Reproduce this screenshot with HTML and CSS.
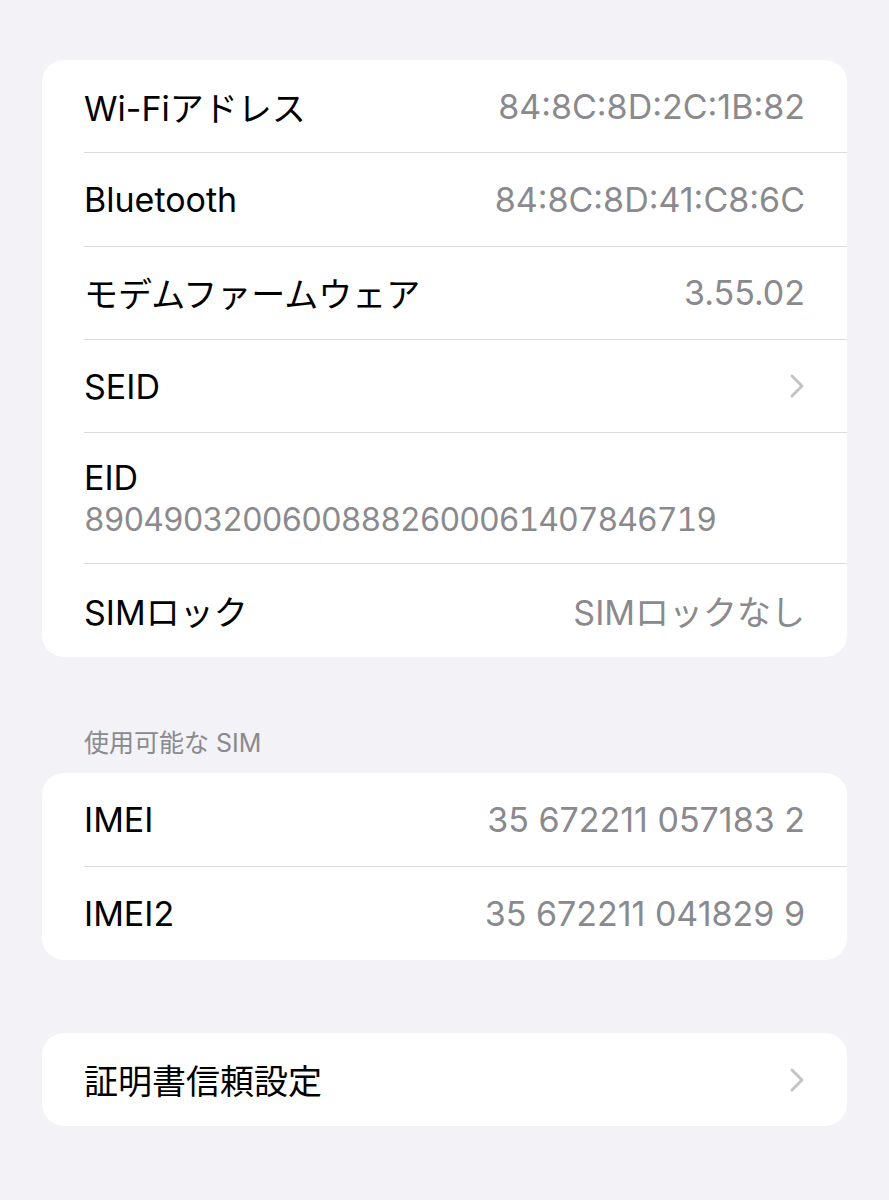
FILE: index.html
```html
<!DOCTYPE html>
<html lang="ja">
<head>
    <meta charset="UTF-8">
    <meta name="viewport" content="width=device-width, initial-scale=1.0">
    <title>情報</title>
    <link rel="stylesheet" href="styles.css">
</head>
<body>
    <div class="page">
        <div class="group">
            <div class="row">
                <span class="label">Wi-Fiアドレス</span>
                <span class="value">84:8C:8D:2C:1B:82</span>
            </div>
            <div class="row">
                <span class="label">Bluetooth</span>
                <span class="value">84:8C:8D:41:C8:6C</span>
            </div>
            <div class="row">
                <span class="label">モデムファームウェア</span>
                <span class="value">3.55.02</span>
            </div>
            <div class="row">
                <span class="label">SEID</span>
                <svg class="chevron" viewBox="0 0 16 26" width="16" height="26">
                    <path d="M3 3 L13 13 L3 23" fill="none" stroke="#c4c4c7" stroke-width="3" stroke-linecap="round" stroke-linejoin="round"/>
                </svg>
            </div>
            <div class="row row-tall">
                <span class="label">EID</span>
                <span class="eid">89049032006008882600061407846719</span>
            </div>
            <div class="row">
                <span class="label">SIMロック</span>
                <span class="value">SIMロックなし</span>
            </div>
        </div>

        <div class="section-title">使用可能な SIM</div>
        <div class="group">
            <div class="row">
                <span class="label">IMEI</span>
                <span class="value">35 672211 057183 2</span>
            </div>
            <div class="row">
                <span class="label">IMEI2</span>
                <span class="value">35 672211 041829 9</span>
            </div>
        </div>

        <div class="group group-last">
            <div class="row">
                <span class="label">証明書信頼設定</span>
                <svg class="chevron" viewBox="0 0 16 26" width="16" height="26">
                    <path d="M3 3 L13 13 L3 23" fill="none" stroke="#c4c4c7" stroke-width="3" stroke-linecap="round" stroke-linejoin="round"/>
                </svg>
            </div>
        </div>
    </div>
</body>
</html>
```

FILE: styles.css
```css
body {
    margin: 0;
    background: #f2f2f7;
    font-family: 'Inter', 'Noto Sans CJK JP', sans-serif;
    color: #000;
}

.page {
    padding: 60px 42px 60px 42px;
}

.group {
    background: #fff;
    border-radius: 22px;
    overflow: hidden;
}

.group-last {
    margin-top: 73px;
}

.row {
    display: flex;
    align-items: center;
    justify-content: space-between;
    height: 93.3px;
    margin-left: 42px;
    padding-right: 42px;
    border-bottom: 1.5px solid #dcdce0;
    box-sizing: border-box;
}

.row:last-child {
    border-bottom: none;
}

.row-tall {
    height: 131px;
    flex-direction: column;
    align-items: flex-start;
    justify-content: center;
    gap: 2px;
}

.label {
    font-size: 34px;
}

.value {
    font-size: 34px;
    color: #8a8a8e;
}

.eid {
    font-size: 32px;
    color: #8a8a8e;
    font-variant-numeric: tabular-nums;
    letter-spacing: -1px;
}

.chevron {
    display: block;
}

.section-title {
    padding: 71px 0 15px 42px;
    font-size: 25px;
    line-height: 30px;
    color: #8a8a8e;
}
```
